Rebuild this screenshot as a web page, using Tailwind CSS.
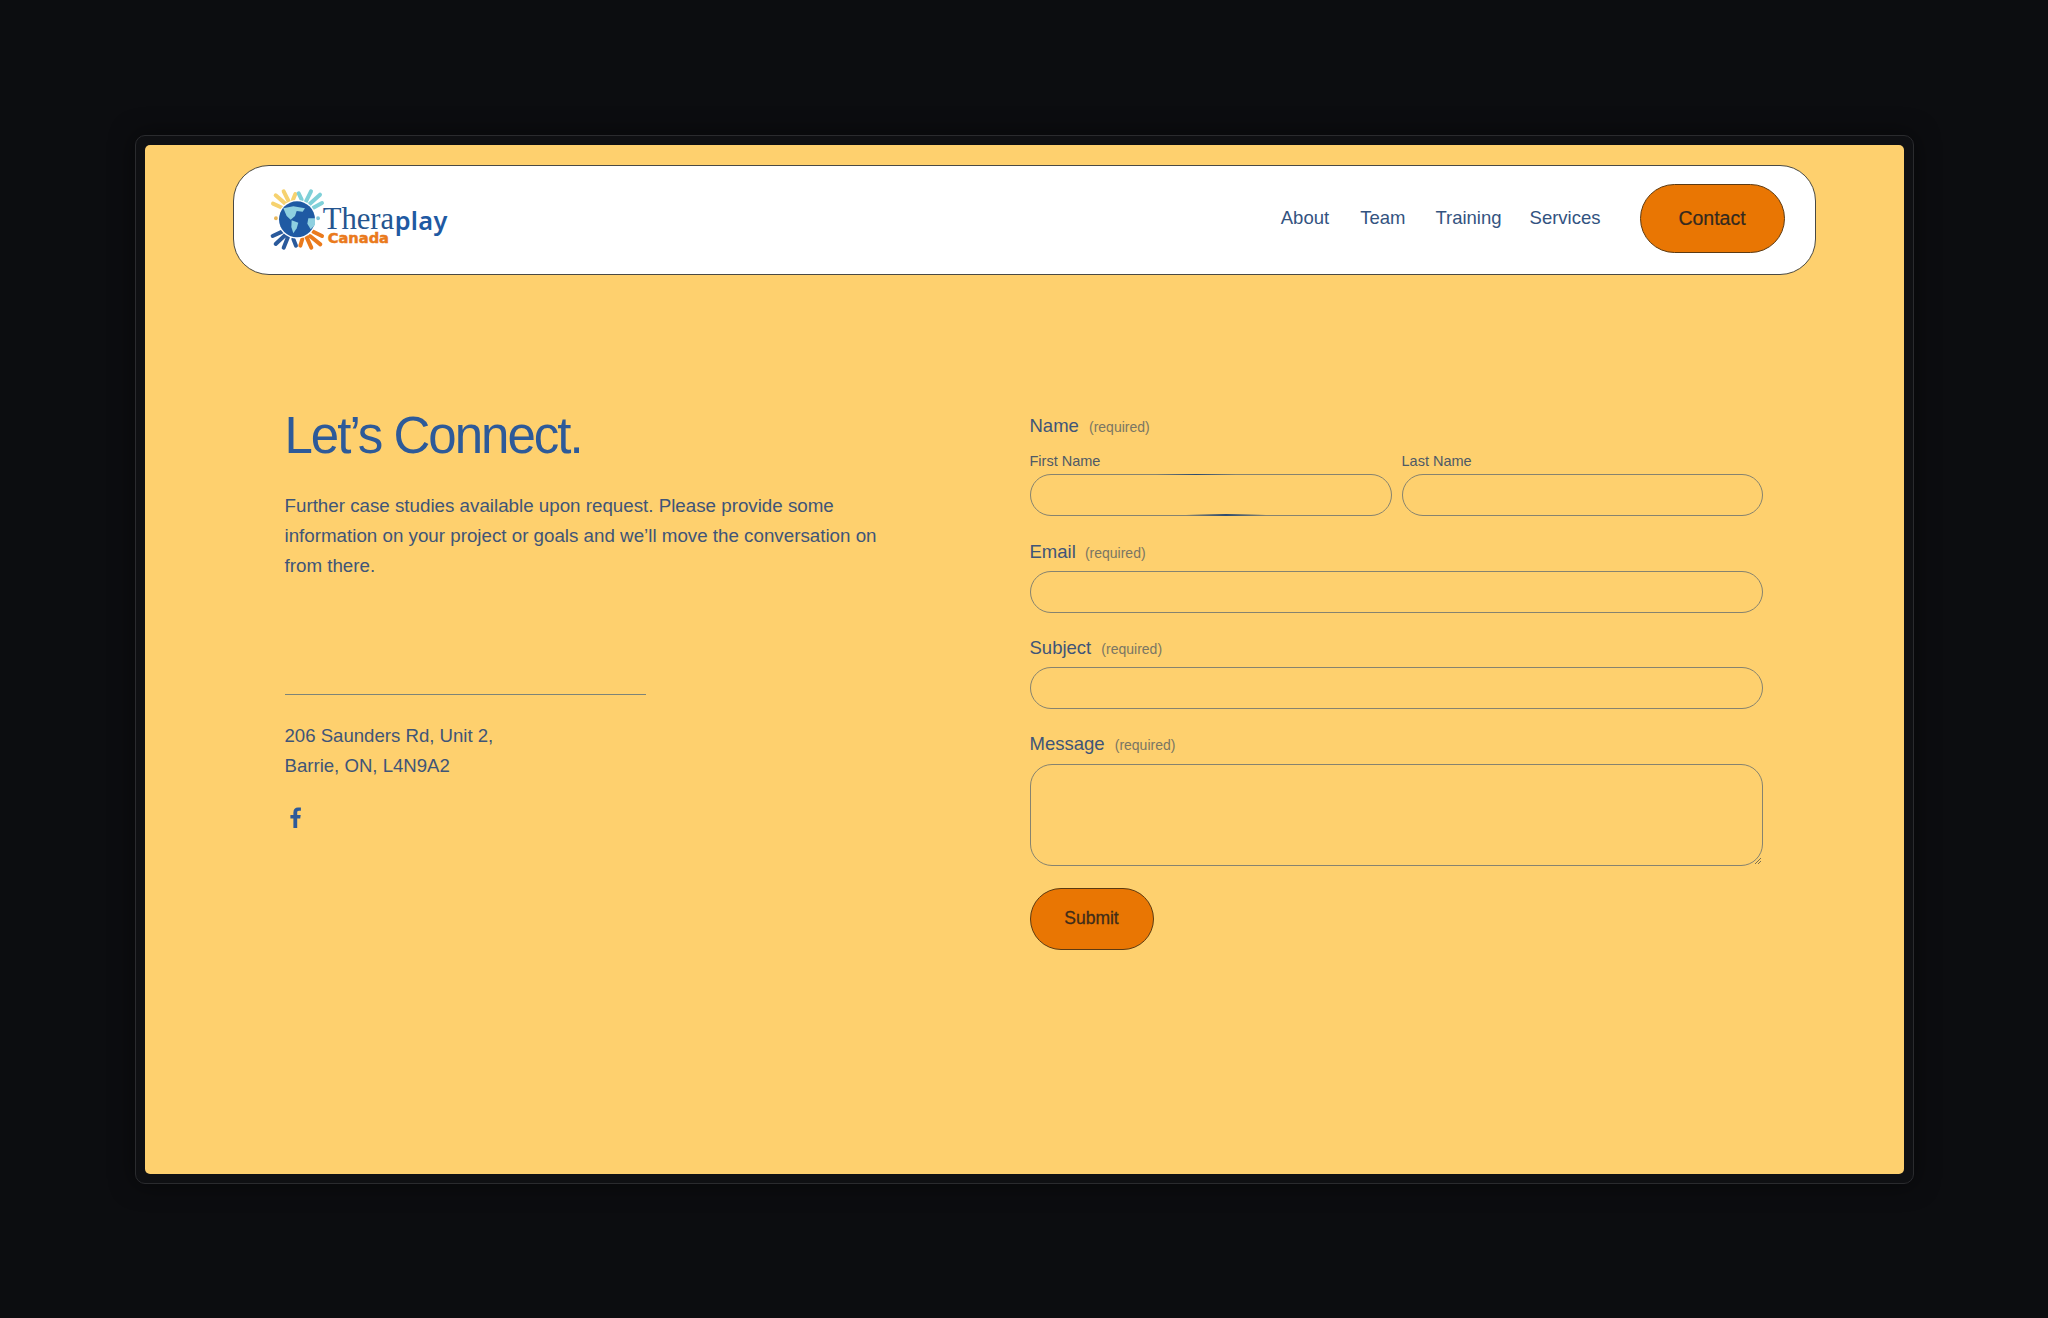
<!DOCTYPE html>
<html lang="en">
<head>
<meta charset="utf-8">
<title>Contact - Theraplay Canada</title>
<script src="https://cdn.jsdelivr.net/npm/@tailwindcss/browser@4"></script>
</head>
<body class="m-0 bg-[#0c0d10] font-['Liberation_Sans',Arial,sans-serif]">
<div class="w-[2048px] h-[1318px] flex items-center justify-center">
  <div class="w-[1779px] h-[1049px] p-[9px] rounded-[10px] border border-[#2a2b2e] bg-[#0f1013] shadow-[0_0_24px_rgba(0,0,0,0.5)]">
    <div class="w-full h-full bg-[#fed06e] rounded-[5px] pt-[20px] px-[88px]">
      <header class="h-[110px] bg-white border border-[#4a4a44] rounded-[36px] flex items-center justify-between pl-[26px] pr-[30px]">
        <svg class="w-[200px] h-[80px] shrink-0 mt-[2px]" viewBox="420 180 600 240" fill="none" aria-label="Theraplay Canada logo">
          <g stroke-width="12" stroke-linecap="round">
            <g stroke="#f6d26f">
              <path d="M459 248 488 261M467 223 498 250M491 211 507 243M526 219 519 236"/>
            </g>
            <g stroke="#7fd0d8">
              <path d="M536 217 545 236M573 211 558 241M600 221 569 249M606 246 580 260"/>
            </g>
            <g stroke="#2a5a9c">
              <path d="M458 345 488 331M467 369 496 342M491 380 504 348M528 374 520 354"/>
            </g>
            <g stroke="#ea7a1c">
              <path d="M541 374 547 354M574 380 559 347M601 370 570 345M606 345 580 332"/>
            </g>
          </g>
          <circle cx="468" cy="292" r="6" fill="#e8b75a"/>
          <circle cx="594" cy="292" r="6" fill="#7fc6d8"/>
          <circle cx="531" cy="295" r="58" fill="#fff"/>
          <circle cx="531" cy="295" r="54" fill="#1f5aa3"/>
          <path d="M490 262 520 256 555 262 548 272 530 270 525 285 512 296 500 285Z" fill="#8fd0e0"/>
          <path d="M515 298 535 305 530 322 520 337 514 318Z" fill="#8fd0e0"/>
          <path d="M565 292 585 292 585 312 572 325 562 308Z" fill="#8fd0e0"/>
          <text x="608" y="325" font-family="'Liberation Serif',serif" font-size="92" fill="#25558f">Thera</text>
          <text x="824" y="326" font-family="'Noto Sans',sans-serif" font-weight="600" font-size="76" fill="#1f5aa3" letter-spacing="1">play</text>
          <text x="623" y="367" font-family="'DejaVu Sans',sans-serif" font-weight="700" font-size="44" fill="#ea7a1c" stroke="#ea7a1c" stroke-width="1.5">Canada</text>
        </svg>
        <nav class="flex items-center text-[18.5px] text-[#33537f] leading-none -mt-[2px]">
          <a class="mr-[31px]">About</a>
          <a class="mr-[30px]">Team</a>
          <a class="mr-[28px]">Training</a>
          <a class="mr-[39px]">Services</a>
          <a class="w-[145px] h-[69px] flex items-center justify-center rounded-[35px] bg-[#e97603] border border-[#5c3a12] text-[#33291f] text-[19.5px] [-webkit-text-stroke:0.2px_#33291f]">Contact</a>
        </nav>
      </header>

      <main class="grid grid-cols-[745px_733px] pl-[52px] pt-[130px]">
        <section class="text-[18.6px] leading-[30px] text-[#3f5578]">
          <h1 class="text-[51px] leading-[60px] tracking-[-2px] text-[#2d5a99] mt-[1px] mb-[25px]">Let’s Connect.</h1>
          <p class="w-[625px] text-[18.75px]">Further case studies available upon request. Please provide some information on your project or goals and we’ll move the conversation on from there.</p>
          <hr class="w-[361px] mt-[113px] mb-[26px] border-0 border-t-[1.5px] border-[#7d8478]">
          <p>206 Saunders Rd, Unit 2,<br>Barrie, ON, L4N9A2</p>
          <svg class="mt-[26px] ml-[5px] w-[12px] h-[21px]" viewBox="0 0 12 21" fill="#2d5a99" aria-label="Facebook"><path d="M3.4 21V11.6H.4V8h3V5.4C3.4 2.2 5.3.5 8.1.5c1.3 0 2.5.1 2.8.1v3.2H9c-1.5 0-1.8.7-1.8 1.8V8h3.5l-.5 3.6h-3V21z"/></svg>
        </section>

        <form class="w-[733px] mt-[10px] text-[#3f5578]">
          <div class="h-[22px] leading-[22px] text-[18.5px]">Name <span class="ml-[5px] text-[14px] text-[#7a7663]">(required)</span></div>
          <div class="grid grid-cols-[362px_361px] gap-x-[10px] mt-[15px]">
            <div>
              <label class="block h-[22px] text-[14.5px] leading-[18px] text-[#4f5a66]">First Name</label>
              <div class="relative h-[42px] rounded-[21px] border border-[#86836f]">
                <span class="absolute left-[125px] top-[-1px] w-[80px] h-[1.5px] bg-[linear-gradient(90deg,transparent,#2b4a70,transparent)]"></span>
                <span class="absolute left-[155px] bottom-[-1px] w-[80px] h-[1.5px] bg-[linear-gradient(90deg,transparent,#2b4a70,transparent)]"></span>
              </div>
            </div>
            <div>
              <label class="block h-[22px] text-[14.5px] leading-[18px] text-[#4f5a66]">Last Name</label>
              <div class="h-[42px] rounded-[21px] border border-[#86836f]"></div>
            </div>
          </div>
          <div class="h-[22px] leading-[22px] text-[18.5px] mt-[25px]">Email <span class="ml-[4px] text-[14px] text-[#7a7663]">(required)</span></div>
          <div class="h-[42px] mt-[8px] rounded-[21px] border border-[#86836f]"></div>
          <div class="h-[22px] leading-[22px] text-[18.5px] mt-[24px]">Subject <span class="ml-[5px] text-[14px] text-[#7a7663]">(required)</span></div>
          <div class="h-[42px] mt-[8px] rounded-[21px] border border-[#86836f]"></div>
          <div class="h-[22px] leading-[22px] text-[18.5px] mt-[24px]">Message <span class="ml-[5px] text-[14px] text-[#7a7663]">(required)</span></div>
          <div class="relative h-[102px] mt-[9px] rounded-[22px] border border-[#86836f]">
            <svg class="absolute right-[0px] bottom-[0px] w-[8px] h-[8px]" viewBox="0 0 8 8" stroke="#5a5648" stroke-width="0.8" fill="none"><path d="M1 7 7 1M4 7 7 4"/></svg>
          </div>
          <button type="button" class="block w-[124px] h-[62px] mt-[22px] rounded-[31px] bg-[#e97603] border border-[#5c3a12] text-[#3e2c19] text-[17.5px] font-normal [-webkit-text-stroke:0.3px_#3e2c19]">Submit</button>
        </form>
      </main>
    </div>
  </div>
</div>
</body>
</html>
